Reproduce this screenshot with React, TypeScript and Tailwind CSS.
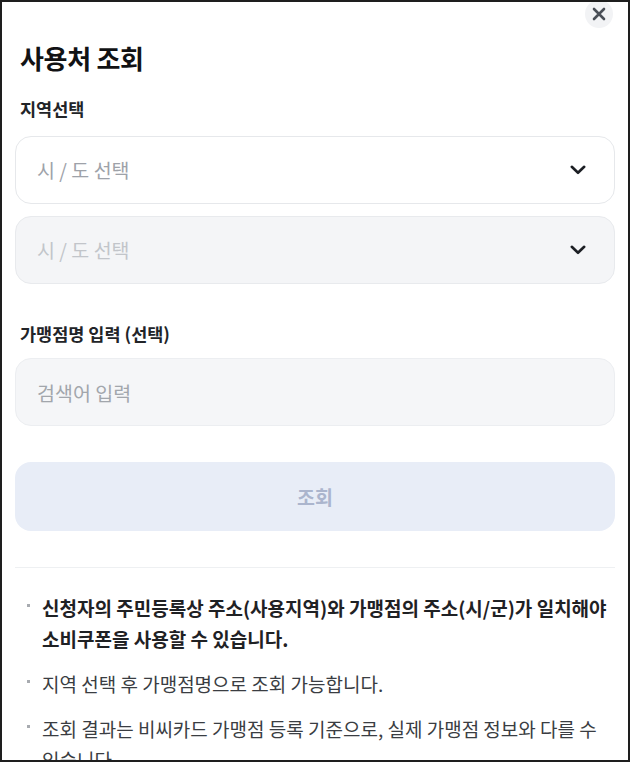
import React from "react";

const notes = [
  {
    text: "신청자의 주민등록상 주소(사용지역)와 가맹점의 주소(시/군)가 일치해야 소비쿠폰을 사용할 수 있습니다.",
    strong: true,
  },
  { text: "지역 선택 후 가맹점명으로 조회 가능합니다.", strong: false },
  {
    text: "조회 결과는 비씨카드 가맹점 등록 기준으로, 실제 가맹점 정보와 다를 수 있습니다.",
    strong: false,
  },
];

function Chevron() {
  return (
    <svg width="16" height="10" viewBox="0 0 16 10" fill="none">
      <path
        d="M1.8 1.8 L8 7.8 L14.2 1.8"
        stroke="#1c1f24"
        strokeWidth="2.6"
        strokeLinecap="round"
        strokeLinejoin="round"
      />
    </svg>
  );
}

function SelectBox({ disabled }: { disabled?: boolean }) {
  return (
    <button
      type="button"
      className={
        disabled
          ? "flex h-[68px] w-full items-center justify-between rounded-[16px] border border-[#e8eaed] bg-[#f4f5f7] pl-[21px] pr-[28px] text-left"
          : "flex h-[68px] w-full items-center justify-between rounded-[16px] border border-[#e6e8eb] bg-white pl-[21px] pr-[28px] text-left"
      }
    >
      <span
        className={
          disabled
            ? "text-[19.5px] leading-[26px] text-[#c2c5ca]"
            : "text-[19.5px] leading-[26px] text-[#9ea2a9]"
        }
      >
        시 / 도 선택
      </span>
      <Chevron />
    </button>
  );
}

export default function App() {
  return (
    <div className="relative h-[762px] w-[630px] overflow-hidden border-2 border-[#1e1e1e] bg-white font-['Noto_Sans_CJK_KR',sans-serif]">
      <button
        type="button"
        aria-label="닫기"
        className="absolute right-[15px] top-[-2px] flex h-[28px] w-[28px] items-center justify-center rounded-full bg-[#f2f3f5]"
      >
        <svg width="14" height="14" viewBox="0 0 14 14" fill="none">
          <path
            d="M2 2 L12 12 M12 2 L2 12"
            stroke="#4a4f57"
            strokeWidth="2.6"
            strokeLinecap="round"
          />
        </svg>
      </button>

      <div className="flex flex-col px-[13px] pt-[40px]">
        <h2 className="px-[5px] text-[26px] font-bold leading-[32px] tracking-[-0.3px] text-[#111214]">
          사용처 조회
        </h2>

        <p className="mt-[23px] px-[5px] text-[17.5px] font-bold leading-[24px] text-[#222428]">
          지역선택
        </p>
        <div className="mt-[15px] flex flex-col gap-[12px]">
          <SelectBox />
          <SelectBox disabled />
        </div>

        <p className="mt-[38px] px-[5px] text-[17.5px] font-bold leading-[24px] text-[#222428]">
          가맹점명 입력 (선택)
        </p>
        <input
          type="text"
          placeholder="검색어 입력"
          className="mt-[12px] h-[68px] w-full rounded-[16px] border border-[#eceef1] bg-[#f5f6f8] pl-[21px] text-[19.5px] text-[#222] outline-none placeholder:text-[#a2a6ac]"
        />

        <button
          type="button"
          className="mt-[36px] h-[69px] w-full rounded-[16px] bg-[#e8edf7] text-[19.5px] font-bold text-[#abb5cd]"
        >
          조회
        </button>

        <div className="mt-[36px] h-px w-full bg-[#eef0f2]" />

        <ul className="mt-[24px] flex flex-col gap-[14px]">
          {notes.map((n) => (
            <li key={n.text} className="flex pl-[12px]">
              <span className="w-[15px] shrink-0">
                <span className="mt-[12px] block h-[3px] w-[3px] bg-[#a8abb0]" />
              </span>
              <span
                className={
                  n.strong
                    ? "break-keep text-[19px] font-bold leading-[31px] text-[#1f2124]"
                    : "break-keep text-[19px] leading-[31px] text-[#3a3d42]"
                }
              >
                {n.text}
              </span>
            </li>
          ))}
        </ul>
      </div>
    </div>
  );
}
